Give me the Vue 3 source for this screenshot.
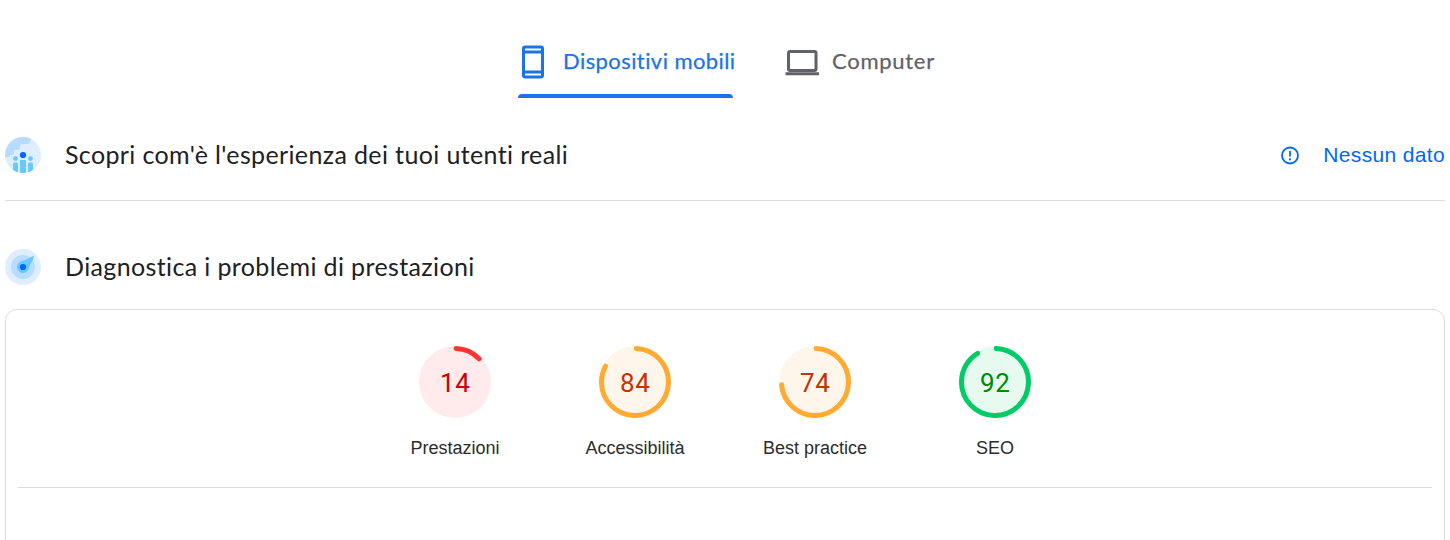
<script setup>
const circumference = 2 * Math.PI * 33.5
const gauges = [
  { label: 'Prestazioni', score: 14, tone: 'poor', arc: 12.2 },
  { label: 'Accessibilità', score: 84, tone: 'average', arc: 82.2 },
  { label: 'Best practice', score: 74, tone: 'average', arc: 73 },
  { label: 'SEO', score: 92, tone: 'good', arc: 90.6 },
]
const dash = (arc) => `${(arc / 100) * circumference} ${circumference}`
</script>

<template>
  <main class="page">
    <nav class="tabs">
      <button class="tab mobile active">
        <svg width="24" height="34" viewBox="0 0 24 34" fill="none" stroke="currentColor">
          <rect x="2.5" y="2" width="19" height="30" rx="1.8" stroke-width="3" />
          <path d="M2.5 7h19M2.5 27h19" stroke-width="2.8" />
        </svg>
        <span>Dispositivi mobili</span>
      </button>
      <button class="tab computer">
        <svg width="34" height="34" viewBox="0 0 34 34" fill="none" stroke="currentColor">
          <rect x="3.5" y="6.5" width="27.5" height="19" rx="1.5" stroke-width="3" />
          <path d="M.5 28.8h33.5" stroke-width="3" />
        </svg>
        <span>Computer</span>
      </button>
    </nav>

    <header class="section field">
      <svg class="badge" width="36" height="36" viewBox="0 0 36 36">
        <defs><clipPath id="disc"><circle cx="18" cy="18" r="18" /></clipPath></defs>
        <g clip-path="url(#disc)">
          <path fill="#deedff" d="M0 0h36v36H0z" />
          <path fill="#b8dcff" d="M0 0h25.5v4q-.5 3-3.5 3h-5q-2 0-2 3t-3 3H9v3q0 2-3 2H5v2H0z" />
          <path fill="#66c9ff" d="M15 23h6v13h-6zM8 27q0-1.5 1.5-1.5h2q1.5 0 1.5 1.5v9H8zM23 27q0-1.5 1.5-1.5h2q1.5 0 1.5 1.5v9h-5z" />
          <circle cx="10.5" cy="21.6" r="2.4" fill="#66c9ff" />
          <circle cx="25.5" cy="21.6" r="2.4" fill="#66c9ff" />
          <circle cx="18" cy="18" r="3.1" fill="#0066ff" />
        </g>
      </svg>
      <h2>Scopri com'è l'esperienza dei tuoi utenti reali</h2>
      <div class="status">
        <svg width="20" height="20" viewBox="0 0 20 20" fill="none" stroke="currentColor" stroke-width="1.8">
          <circle cx="10" cy="10.5" r="8" /><path d="M10 6v5.6M10 13.2v2" />
        </svg>
        <span>Nessun dato</span>
      </div>
    </header>

    <header class="section lab">
      <svg class="badge" width="36" height="36" viewBox="0 0 36 36">
        <circle cx="18" cy="18" r="18" fill="#deedff" />
        <circle cx="18" cy="18" r="12" fill="#b8dcff" />
        <path fill="#66c9ff" d="M29 7.2q-.3 3-2.5 6-1.6 2.3-2.8 6.6A6 6 0 1 1 16 12.3q4.3-1.1 7-2.9 3-2 5.4-2.5z" />
        <circle cx="18" cy="18" r="3.1" fill="#0066ff" />
      </svg>
      <h2>Diagnostica i problemi di prestazioni</h2>
    </header>

    <section class="report">
      <div class="gauges">
        <div v-for="g in gauges" :key="g.label" class="gauge" :class="g.tone">
          <div class="dial">
            <svg width="72" height="72" viewBox="0 0 72 72">
              <circle class="base" cx="36" cy="36" r="36" />
              <circle class="arc" cx="36" cy="36" r="33.5" :stroke-dasharray="dash(g.arc)" transform="rotate(-88 36 36)" />
            </svg>
            <span class="score">{{ g.score }}</span>
          </div>
          <span class="label">{{ g.label }}</span>
        </div>
      </div>
    </section>
  </main>
</template>

<style>
body { background: #fff; overflow: hidden; }
</style>

<style scoped>
* { box-sizing: border-box; }
.page { width: 1450px; height: 540px; padding: 0 5px; overflow: hidden; font-family: "Liberation Sans", Arial, sans-serif; color: #202124; }
svg { display: block; flex: none; }
.tabs { display: flex; height: 98px; padding-left: 513px; gap: 52px; }
.tab { display: flex; align-items: center; border: 0; background: none; height: 98px; padding: 26px 0 0; color: #5f6368; font: 400 22px/28px Lato, sans-serif; white-space: nowrap; -webkit-text-stroke: .25px currentColor; }
.tab span { padding-bottom: 2px; }
.tab.mobile { width: 215px; padding-left: 3px; position: relative; }
.tab.mobile span { margin-left: 18px; letter-spacing: .42px; }
.tab.computer span { margin-left: 13px; letter-spacing: .72px; }
.tab.active { color: #1a73e8; }
.tab.active::after { content: ""; position: absolute; left: 0; right: 0; bottom: 0; height: 4px; border-radius: 4px 4px 0 0; background: #1a73e8; }
.section { display: flex; align-items: center; }
.field { height: 103px; padding-top: 12px; border-bottom: 1px solid #dadce0; }
.lab { height: 108px; padding-top: 24px; }
h2 { margin: 0 0 0 24px; padding-bottom: 2px; font: 400 25px/32px Lato, sans-serif; letter-spacing: .37px; white-space: nowrap; }
.status { display: flex; align-items: center; margin-left: auto; gap: 23px; color: #0066ff; font-size: 21px; line-height: 30px; letter-spacing: .35px; }
.report { height: 300px; border: 1px solid #dadce0; border-radius: 12px; padding: 0 12px; }
.gauges { display: flex; justify-content: center; height: 178px; padding-top: 36px; border-bottom: 1px solid #dadce0; }
.gauge { width: 180px; display: flex; flex-direction: column; align-items: center; }
.dial { display: grid; place-items: center; width: 72px; height: 72px; }
.dial > * { grid-area: 1 / 1; }
.arc { fill: none; stroke-width: 5; stroke-linecap: round; }
.score { font: 400 26px/36px Roboto, sans-serif; letter-spacing: .6px; padding: 2px 0 0 .5px; }
.label { margin-top: 19px; font-size: 18px; line-height: 22px; color: #2c2c2c; white-space: nowrap; }
.poor .base { fill: #ffebeb; } .poor .arc { stroke: #f33; } .poor .score { color: #c00; }
.average .base { fill: #fff6eb; } .average .arc { stroke: #fa3; } .average .score { color: #c33300; }
.good .base { fill: #e6faf0; } .good .arc { stroke: #0c6; } .good .score { color: #080; }
</style>
